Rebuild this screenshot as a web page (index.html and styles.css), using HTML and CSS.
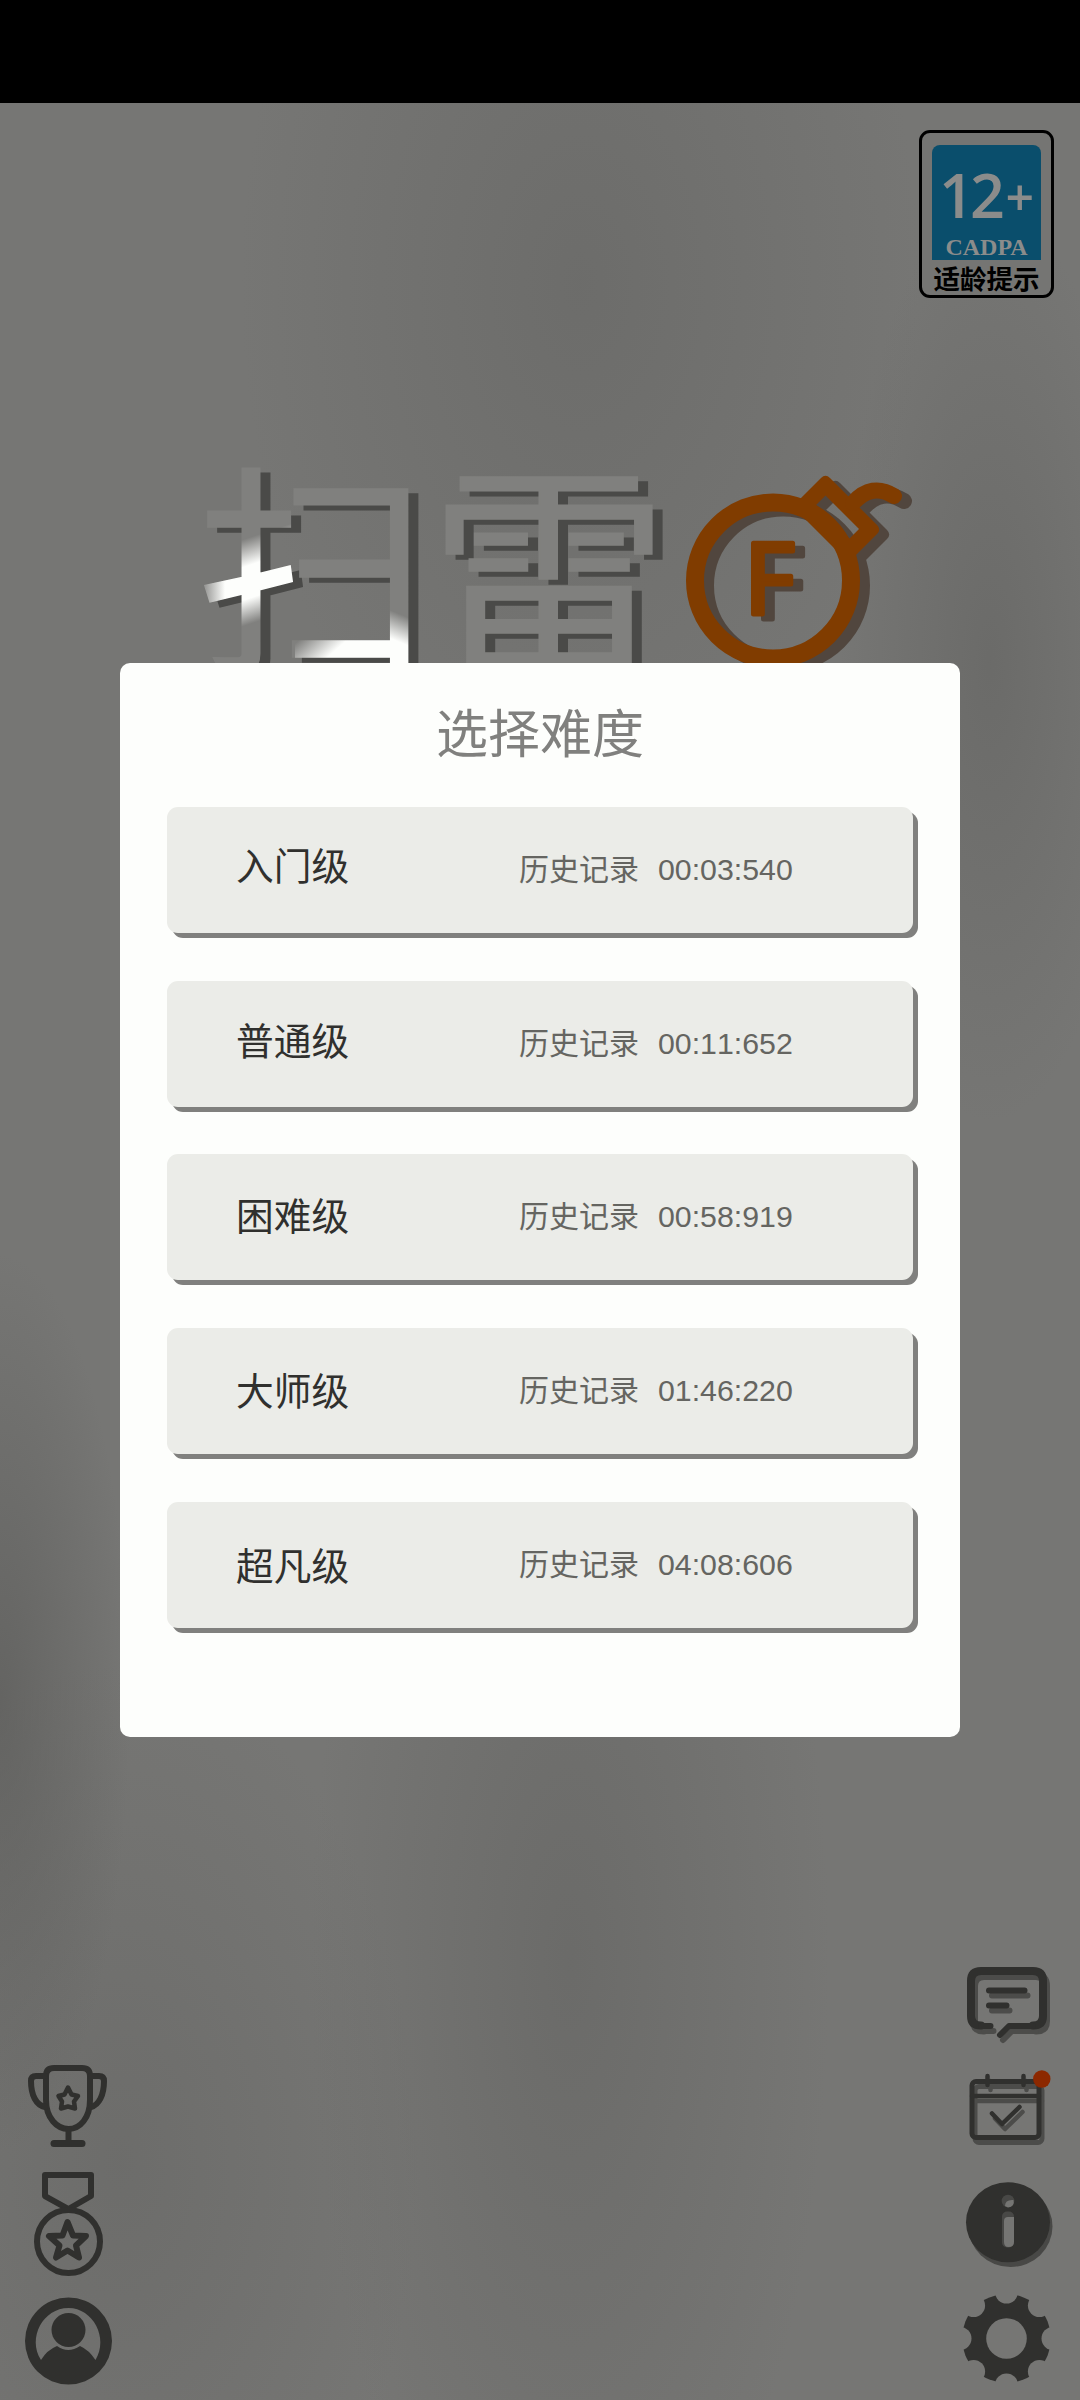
FILE: index.html
```html
<!DOCTYPE html>
<html lang="zh-CN">
<head>
<meta charset="utf-8">
<title>扫雷</title>
<link rel="stylesheet" href="styles.css">
</head>
<body>
<div class="status-bar"></div>
<main class="home">
  <div class="top">
    <div class="age-badge">
      <div class="age-panel">
        <div class="age-number"><span class="age-digits">12</span><span class="age-plus">+</span></div>
        <div class="age-org">CADPA</div>
      </div>
      <div class="age-caption">适龄提示</div>
    </div>
  </div>

  <svg class="logo" viewBox="190 450 740 250" width="740" height="250">
    <defs>
      <linearGradient id="glintA" gradientUnits="userSpaceOnUse" x1="230" y1="544" x2="256" y2="622">
        <stop offset="0" stop-color="#80807e"/>
        <stop offset=".32" stop-color="#fdfefc"/>
        <stop offset=".7" stop-color="#fdfefc"/>
        <stop offset="1" stop-color="#80807e"/>
      </linearGradient>
      <linearGradient id="glintB" gradientUnits="userSpaceOnUse" x1="315" y1="626" x2="345" y2="660">
        <stop offset="0" stop-color="#80807e"/>
        <stop offset=".7" stop-color="#fdfefc"/>
      </linearGradient>
      <linearGradient id="glintC" gradientUnits="userSpaceOnUse" x1="395" y1="612" x2="385" y2="636">
        <stop offset="0" stop-color="#80807e"/>
        <stop offset="1" stop-color="#fdfefc"/>
      </linearGradient>
      <linearGradient id="edge" gradientUnits="userSpaceOnUse" x1="200" y1="0" x2="225" y2="0">
        <stop offset="0" stop-color="#80807e"/>
        <stop offset="1" stop-color="#80807e" stop-opacity="0"/>
      </linearGradient>
      <pattern id="glint" patternUnits="userSpaceOnUse" x="190" y="440" width="240" height="260" viewBox="190 440 240 260">
        <rect x="190" y="440" width="240" height="260" fill="#80807e"/>
        <rect x="190" y="520" width="105" height="130" fill="url(#glintA)"/>
        <rect x="190" y="520" width="40" height="130" fill="url(#edge)"/>
        <rect x="295" y="600" width="90" height="100" fill="url(#glintB)"/>
        <rect x="385" y="600" width="45" height="100" fill="url(#glintC)"/>
      </pattern>
      <filter id="cast" filterUnits="userSpaceOnUse" x="190" y="440" width="500" height="260" color-interpolation-filters="sRGB">
        <feDropShadow dx="10" dy="5" stdDeviation="0.3" flood-color="#4a4a48"/>
      </filter>
      <filter id="castWarm" filterUnits="userSpaceOnUse" x="670" y="450" width="260" height="250" color-interpolation-filters="sRGB">
        <feDropShadow dx="10" dy="5" stdDeviation="0.3" flood-color="#51463e"/>
      </filter>
    </defs>
    <g class="logo-text" filter="url(#cast)">
      <text x="196" y="656" textLength="234" lengthAdjust="spacingAndGlyphs" fill="url(#glint)" stroke="url(#glint)">扫</text>
      <text x="428" y="656" textLength="242" lengthAdjust="spacingAndGlyphs" class="logo-face">雷</text>
    </g>
    <g class="bomb" filter="url(#castWarm)">
      <circle cx="773" cy="580.500" r="78" fill="none" stroke-width="18"/>
      <path fill-rule="evenodd" stroke="none" d="M821 478Q825.500 473.500 830 478L877 525Q881.500 529.500 877 534L848.500 562.500L792.500 506.500ZM825.500 495.500L859 529L849.500 538.500L816 505Z"/>
      <path d="M853 503Q872 482 894 496" fill="none" stroke-width="16" stroke-linecap="round"/>
      <text class="logo-f" x="744" y="613.500">F</text>
    </g>
  </svg>

  <div class="bottom">
    <nav class="side">
      <svg viewBox="20 2054 96 100" width="96" height="100" class="line">
        <path d="M46 2076Q46 2068 54 2068H82Q90 2068 90 2076V2100C90 2118 80 2129 68.500 2129C57 2129 46 2118 46 2100Z"/>
        <path d="M45 2076H36Q31 2076 31 2081C31 2095 36 2105 45 2107M91 2076H99Q104 2076 104 2081C104 2095 99 2105 91 2107M68.500 2129V2143"/>
        <path stroke-width="7" d="M54 2143.500H82"/>
        <path stroke-width="4.500" d="M68 2087.500L71.500 2094.500L78 2096L74 2101.500L75 2108.500L68 2106.500L61 2108.500L62 2101.500L58.500 2096L64.500 2094.500Z"/>
      </svg>
      <svg viewBox="20 2154 96 130" width="96" height="130" class="line">
        <path d="M45 2175H91V2196L68.500 2209L45 2196Z"/>
        <circle cx="68.500" cy="2241.500" r="31.500"/>
        <path stroke-width="6" d="M67.500 2222L73 2235.500L86 2236L76 2245.500L79 2257.500L67.500 2250.500L56 2257.500L59.500 2245.500L49 2236L62.500 2235.500Z"/>
      </svg>
      <svg viewBox="20 2284 96 116" width="96" height="116">
        <path class="solid" fill-rule="evenodd" d="M68.500 2297.500a43.500 43.500 0 1 1 0 87a43.500 43.500 0 1 1 0-87ZM41 2360Q47 2350 57 2346Q68 2354 80 2346Q89 2350 95.500 2360C109 2338 93 2308 68.500 2308C43 2308 27 2338 41 2360Z"/>
        <circle class="solid" cx="68.500" cy="2330" r="17"/>
      </svg>
    </nav>
    <nav class="side">
      <svg viewBox="960 1955 96 100" width="96" height="100" class="line">
        <defs><g id="chat"><path stroke-width="8" d="M1033 2025.500Q1043 2025.500 1043 2016V1981Q1043 1971 1033 1971H981Q971 1971 971 1981V2016Q971 2025.500 981 2025.500"/><path stroke-width="6" d="M981 2026H990.500M1033 2026H1009L1000 2035M989 1990.500H1024.500M989 2005.500H1006.500"/></g></defs>
        <use href="#chat" x="3" y="5" class="line-shade"/><use href="#chat"/>
      </svg>
      <svg viewBox="960 2055 96 105" width="96" height="105" class="line">
        <defs><g id="cal" stroke-width="5"><rect x="972" y="2081.500" width="67" height="56" rx="4"/><path stroke-width="4.500" d="M972 2096H1039M987.500 2076V2085M1023.500 2076V2085M992 2113.500L1002 2124L1019.500 2107"/></g></defs>
        <use href="#cal" x="3" y="5" class="line-shade"/><use href="#cal"/>
        <circle class="dot" cx="1041.800" cy="2079" r="8.700"/>
      </svg>
      <svg viewBox="960 2160 96 120" width="96" height="120">
        <ellipse class="solid-shade" cx="1010.500" cy="2226.500" rx="42" ry="40.500"/>
        <ellipse class="solid" cx="1008" cy="2222.300" rx="42" ry="40"/>
        <circle class="solid-shade" cx="1008" cy="2201" r="6.300"/><rect class="solid-shade" x="1002" y="2211.500" width="12" height="36" rx="5"/>
        <path class="hole" d="M1005 2206Q1005 2200 1012 2200H1013.500Q1015 2207 1008 2207.500ZM1004 2221Q1004 2217 1008 2217H1014V2242Q1014 2247 1008.500 2247Q1004 2247 1004 2242Z"/>
      </svg>
      <svg viewBox="960 2280 96 120" width="96" height="120">
        <mask id="teeth" maskUnits="userSpaceOnUse" x="950" y="2280" width="120" height="120">
          <circle cx="1006.500" cy="2338.500" r="44.500" fill="#fff"/>
          <circle cx="1006.500" cy="2338.500" r="20.300"/>
          <circle cx="1006.500" cy="2292" r="11.500"/><circle cx="1006.500" cy="2385" r="11.500"/>
          <circle cx="960" cy="2338.500" r="11.500"/><circle cx="1053" cy="2338.500" r="11.500"/>
          <circle cx="973.600" cy="2305.600" r="11.500"/><circle cx="1039.400" cy="2305.600" r="11.500"/>
          <circle cx="973.600" cy="2371.400" r="11.500"/><circle cx="1039.400" cy="2371.400" r="11.500"/>
        </mask>
        <rect class="solid" x="955" y="2285" width="105" height="108" mask="url(#teeth)"/>
      </svg>
    </nav>
  </div>
</main>

<div class="overlay">
  <section class="dialog">
    <h1 class="dialog-title">选择难度</h1>
    <div class="levels">
      <button class="level"><span class="level-name">入门级</span><span class="level-note">历史记录</span><span class="level-time">00:03:540</span></button>
      <button class="level"><span class="level-name">普通级</span><span class="level-note">历史记录</span><span class="level-time">00:11:652</span></button>
      <button class="level"><span class="level-name">困难级</span><span class="level-note">历史记录</span><span class="level-time">00:58:919</span></button>
      <button class="level"><span class="level-name">大师级</span><span class="level-note">历史记录</span><span class="level-time">01:46:220</span></button>
      <button class="level"><span class="level-name">超凡级</span><span class="level-note">历史记录</span><span class="level-time">04:08:606</span></button>
    </div>
  </section>
</div>
</body>
</html>
```
FILE: styles.css
```css
* { box-sizing: border-box; }
body {
  margin: 0;
  width: 1080px;
  height: 2400px;
  display: flex;
  flex-direction: column;
  overflow: hidden;
  font-family: "Liberation Sans", "Noto Sans CJK SC", sans-serif;
}
svg { display: block; }
.status-bar { height: 103px; background: #000; flex: none; }

.home {
  flex: 1;
  display: flex;
  flex-direction: column;
  background:
    radial-gradient(ellipse 130px 450px at 0 1600px, rgba(92, 92, 90, .7), rgba(92, 92, 90, 0)),
    radial-gradient(ellipse 340px 560px at 580px 180px, rgba(106, 106, 104, .8), rgba(106, 106, 104, 0)),
    radial-gradient(ellipse 150px 460px at 990px 560px, rgba(102, 102, 100, .7), rgba(102, 102, 100, 0)),
    radial-gradient(ellipse 260px 700px at 570px 1860px, rgba(104, 104, 102, .8), rgba(104, 104, 102, 0)),
    radial-gradient(ellipse 300px 500px at 120px 2060px, rgba(106, 106, 104, .8), rgba(106, 106, 104, 0)),
    #767674;
}
.top { display: flex; justify-content: flex-end; padding: 27px 26px 0 0; }

.age-badge {
  width: 135px;
  height: 168px;
  padding: 12px 10px 0;
  border: 3px solid #000;
  border-radius: 11px;
  background: #757573;
}
.age-panel {
  height: 115px;
  border-radius: 8px 8px 0 0;
  background: #0a4e6c;
  color: #8b8c8b;
}
.age-number {
  display: flex;
  justify-content: space-between;
  height: 88px;
  padding: 19px 7px 0 7px;
}
.age-digits { font: 600 61px/61px "Open Sans", sans-serif; letter-spacing: -4px; }
.age-plus { font: 600 50px/67px "Open Sans", sans-serif; }
.age-org { text-align: center; font: 700 24px/28px "Liberation Serif", serif; }
.age-caption {
  margin: 0 -5px;
  text-align: center;
  white-space: nowrap;
  color: #000;
  font: 700 26.500px/36px "Noto Sans CJK SC", sans-serif;
}

.logo { margin: 152px 0 0 190px; }
.logo-text {
  font: 400 224px "Noto Sans CJK SC", sans-serif;
  stroke-width: 1.500px;
}
.logo-face { fill: #80807e; stroke: #80807e; }
.logo-f { font: 400 98px "Noto Sans", sans-serif; stroke-width: 5px; stroke-linejoin: round; }
.bomb { fill: #803c00; stroke: #803c00; }

.bottom {
  flex: 1;
  display: flex;
  justify-content: space-between;
  align-items: flex-end;
  padding: 0 24px 0 20px;
}
.side { display: flex; flex-direction: column; }
.line { fill: none; stroke: #30302e; stroke-width: 6; stroke-linecap: round; stroke-linejoin: round; }
.line-shade { stroke: #4c4c4a; }
.solid { fill: #30302e; }
.solid-shade { fill: #484846; }
.hole { fill: #757573; }
.dot { fill: #8c2800; stroke: none; }

.overlay {
  position: fixed;
  inset: 0;
  display: flex;
  align-items: center;
  justify-content: center;
}
.dialog {
  width: 840px;
  height: 1074px;
  padding: 32px 47px 0;
  border-radius: 10px;
  background: #fdfefc;
}
.dialog-title {
  margin: 0 0 40px;
  text-align: center;
  color: #80807e;
  font: 400 52px/72px "Noto Sans CJK SC", sans-serif;
}
.levels { display: grid; grid-template-rows: repeat(5, 126px); row-gap: 47.700px; }
.level {
  display: flex;
  align-items: center;
  width: 746px;
  padding: 0 0 0 69px;
  border: 0;
  border-radius: 11px;
  background: #ebece8;
  box-shadow: 5px 5px 0 #80807e;
  text-align: left;
  font-family: inherit;
}
.level-name {
  width: 283px;
  padding-bottom: 7px;
  color: #30302e;
  font-size: 37.700px;
  line-height: 56px;
}
.level:nth-child(2) .level-name { padding-bottom: 4px; }
.level:nth-child(3) .level-name { padding-bottom: 1px; }
.level:nth-child(4) .level-name { padding: 2px 0 0; }
.level:nth-child(5) .level-name { padding: 4px 0 0; }
.level-note { width: 139px; color: #656561; font-size: 30px; line-height: 44px; }
.level-time { color: #656561; font-size: 30.300px; line-height: 44px; font-kerning: none; }
```
